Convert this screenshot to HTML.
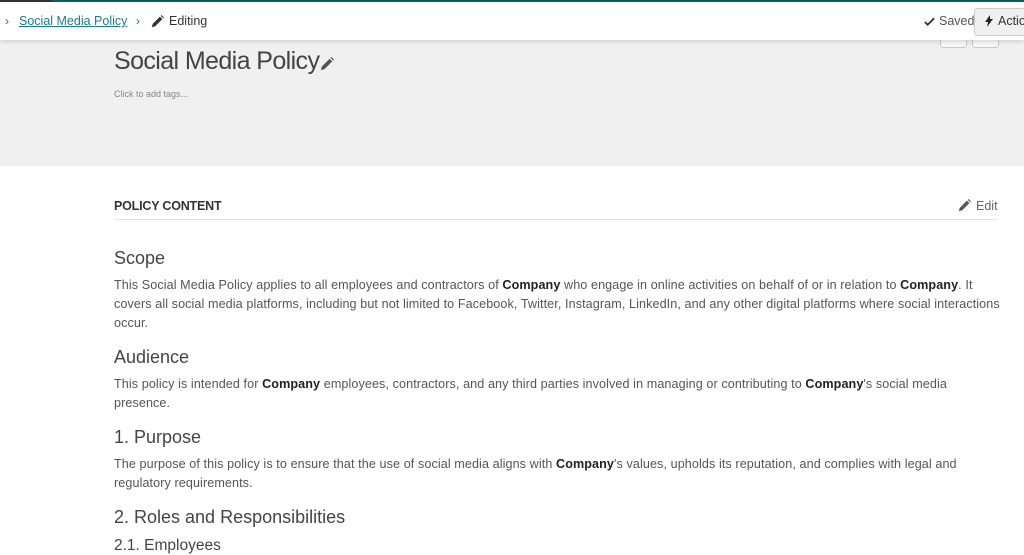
<!DOCTYPE html>
<html><head><meta charset="utf-8"><style>
body{margin:0;width:1024px;height:553px;overflow:hidden;background:#fff;font-family:"Liberation Sans",sans-serif;color:#4c4c4c;position:relative}
.top{position:absolute;left:0;top:0;width:1024px;height:2px;background:#0d5c63}
.top:before{content:"";position:absolute;left:0;top:0;width:52px;height:2px;background:#333}
.hdr{position:absolute;top:2px;left:0;width:1024px;height:38px;background:#fff;box-shadow:0 2px 4px rgba(0,0,0,.12);z-index:2}
.gray{position:absolute;top:40px;left:0;width:1024px;height:126px;background:#f0f0f0}
.abs{position:absolute;white-space:nowrap}
p{margin:0;position:absolute;left:114px;width:886px;font-size:12.6px;letter-spacing:.09px;line-height:19.2px;color:#555}
b{color:#222}
h{position:absolute;left:114px;font-size:18px;color:#444}
</style></head><body>
<div class="top"></div>
<div class="hdr">
<span class="abs" style="left:5px;top:12px;font-size:12px;color:#0d7c86">›</span>
<span class="abs" style="left:19px;top:12px;font-size:12.5px;color:#1a7f89;text-decoration:underline">Social Media Policy</span>
<span class="abs" style="left:136px;top:12px;font-size:12px;color:#0d7c86">›</span>
<svg class="abs" style="left:151px;top:13px" width="13" height="13" viewBox="0 0 16 16"><path d="M1 15l1-4 9-9 3 3-9 9z M12 1l3 3 1-1-3-3z" fill="#333"/></svg>
<span class="abs" style="left:169px;top:12px;font-size:12.5px;color:#333">Editing</span>
<svg class="abs" style="left:924px;top:15px" width="11" height="10" viewBox="0 0 12 10"><path d="M1 5l3 3 7-7" stroke="#333" stroke-width="2" fill="none"/></svg>
<span class="abs" style="left:939px;top:12px;font-size:12.5px;color:#555">Saved</span>
<div class="abs" style="left:974px;top:6px;width:60px;height:26px;background:#f0f0f0;border:1px solid #ccc;border-radius:3px"></div>
<svg class="abs" style="left:985px;top:13px" width="8" height="12" viewBox="0 0 8 12"><path d="M5 0L0 7h3l-1 5 6-8H5z" fill="#222"/></svg>
<span class="abs" style="left:998px;top:12px;font-size:12.5px;color:#333">Actions</span>
</div>
<div class="gray">
<div class="abs" style="left:940px;top:-2px;width:25px;height:8px;background:#f7f7f7;border:1px solid #ccc;border-radius:0 0 3px 3px"></div>
<div class="abs" style="left:972px;top:-2px;width:25px;height:8px;background:#f7f7f7;border:1px solid #ccc;border-radius:0 0 3px 3px"></div>
<span class="abs" style="left:114px;top:7px;font-size:25px;letter-spacing:-.6px;color:#444">Social Media Policy</span>
<svg class="abs" style="left:320px;top:17px" width="14" height="14" viewBox="0 0 16 16"><path d="M1 15l1-4 9-9 3 3-9 9z M12 1l3 3 1-1-3-3z" fill="#555"/></svg>
<span class="abs" style="left:114px;top:49px;font-size:9px;color:#888">Click to add tags...</span>
</div>
<span class="abs" style="left:114px;top:199px;font-size:12.5px;font-weight:bold;color:#333;letter-spacing:-.2px">POLICY CONTENT</span>
<svg class="abs" style="left:958px;top:199px" width="13" height="13" viewBox="0 0 16 16"><path d="M1 15l1-4 9-9 3 3-9 9z M12 1l3 3 1-1-3-3z" fill="#555"/></svg>
<span class="abs" style="left:976px;top:199px;font-size:12.5px;color:#666">Edit</span>
<div class="abs" style="left:114px;top:219px;width:884px;height:1px;background:#e3e3e3"></div>
<h style="top:248px">Scope</h>
<p style="top:276px">This Social Media Policy applies to all employees and contractors of <b>Company</b> who engage in online activities on behalf of or in relation to <b>Company</b>. It covers all social media platforms, including but not limited to Facebook, Twitter, Instagram, LinkedIn, and any other digital platforms where social interactions occur.</p>
<h style="top:347px">Audience</h>
<p style="top:375px">This policy is intended for <b>Company</b> employees, contractors, and any third parties involved in managing or contributing to <b>Company</b>'s social media presence.</p>
<h style="top:427px">1. Purpose</h>
<p style="top:455px">The purpose of this policy is to ensure that the use of social media aligns with <b>Company</b>'s values, upholds its reputation, and complies with legal and regulatory requirements.</p>
<h style="top:507px">2. Roles and Responsibilities</h>
<h style="top:537px;font-size:15.5px">2.1. Employees</h>
</body></html>
